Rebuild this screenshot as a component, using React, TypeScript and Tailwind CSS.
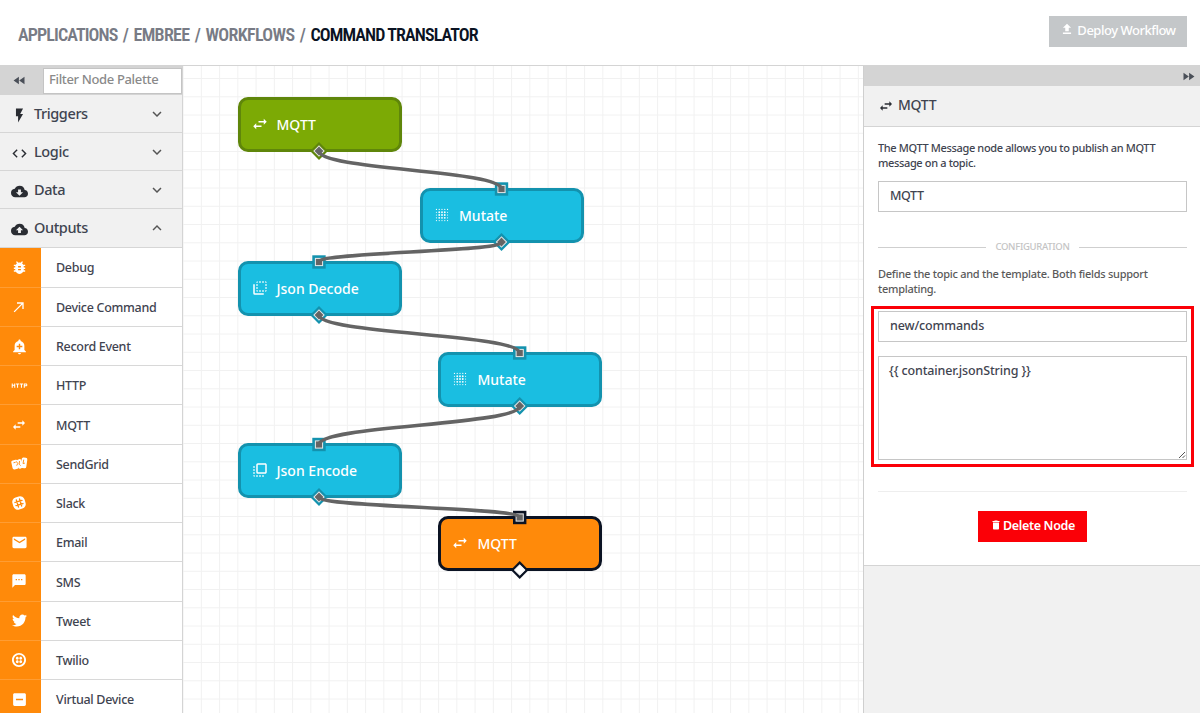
import type { ReactNode } from "react";
import type { IconType } from "react-icons";
import {
  MdAddAlert, MdBugReport, MdCallMade, MdCloudDownload, MdCloudUpload, MdCode, MdDelete,
  MdEmail, MdFastForward, MdFastRewind, MdFlashOn, MdFlipToBack, MdFlipToFront, MdHttp,
  MdIndeterminateCheckBox, MdKeyboardArrowDown, MdKeyboardArrowUp, MdSms, MdSwapHoriz,
} from "react-icons/md";
import { FaTwitter } from "react-icons/fa";
import { SiTwilio } from "react-icons/si";

function SlackIcon() {
  return (
    <svg viewBox="0 0 24 24" className="size-4" fill="none">
      <rect x="2.5" y="2.5" width="19" height="19" rx="7" fill="#fff" transform="rotate(-17 12 12)" />
      <g stroke="#ff8a0a" strokeWidth="2" strokeLinecap="round" transform="rotate(-17 12 12)">
        <path d="M9.5 6.5v11M14.5 6.5v11M6.5 9.5h11M6.5 14.5h11" />
      </g>
    </svg>
  );
}

function SendGridIcon() {
  return (
    <svg viewBox="0 0 24 24" className="size-[17px]">
      <g fill="#fff">
        <rect x="1" y="7" width="9" height="13" rx="2.500" transform="rotate(-12 6 12.500)" />
        <rect x="8.500" y="6" width="7.500" height="13" rx="2.500" transform="rotate(-22 12.500 12)" />
        <rect x="14.500" y="3.500" width="8" height="15" rx="2.500" transform="rotate(8 18 10)" />
      </g>
      <path d="M3.500 11l3-.7M7.500 9l2 3-1.500 3M12 8.500l-.5 4.500 2 2M18 6.500l-1 5.500 2.500-.5" stroke="#ff8a0a" strokeWidth="1.300" fill="none" />
    </svg>
  );
}

function UploadIcon() {
  return (
    <svg viewBox="0 0 24 24" className="mb-[3px] size-[14px]" fill="currentColor">
      <path d="M9 16h6v-6h4l-7-7-7 7h4zm-4 2h14v2.500H5z" />
    </svg>
  );
}

const steps = [-2, -1, 0, 1, 2];

function MutateIcon({ className }: { className?: string }) {
  return (
    <svg viewBox="0 0 24 24" className={className} fill="currentColor">
      {steps.map((row) =>
        steps.map((col) => (
          <circle key={`${row},${col}`} cx={12 + col * 3.7} cy={12 + row * 3.7} r={Math.abs(row) === 2 || Math.abs(col) === 2 ? 0.8 : 1.2} />
        )),
      )}
    </svg>
  );
}

const sections: { label: string; Icon: IconType; open?: boolean }[] = [
  { label: "Triggers", Icon: MdFlashOn },
  { label: "Logic", Icon: MdCode },
  { label: "Data", Icon: MdCloudDownload },
  { label: "Outputs", Icon: MdCloudUpload, open: true },
];

const outputs: { label: string; icon: ReactNode }[] = [
  { label: "Debug", icon: <MdBugReport className="size-[17px]" /> },
  { label: "Device Command", icon: <MdCallMade className="size-4" /> },
  { label: "Record Event", icon: <MdAddAlert className="size-[17px]" /> },
  { label: "HTTP", icon: <MdHttp className="size-[17px]" /> },
  { label: "MQTT", icon: <MdSwapHoriz className="size-4" /> },
  { label: "SendGrid", icon: <SendGridIcon /> },
  { label: "Slack", icon: <SlackIcon /> },
  { label: "Email", icon: <MdEmail className="size-[17px]" /> },
  { label: "SMS", icon: <MdSms className="size-4" /> },
  { label: "Tweet", icon: <FaTwitter className="size-[15px]" /> },
  { label: "Twilio", icon: <SiTwilio className="size-[14px]" /> },
  { label: "Virtual Device", icon: <MdIndeterminateCheckBox className="size-[17px]" /> },
];

const nodes: { label: string; Icon: IconType | typeof MutateIcon; place: string; tone: string }[] = [
  { label: "MQTT", Icon: MdSwapHoriz, place: "left-[54.500px] top-[31px]", tone: "bg-[#7caa05] border-[#5f860a]" },
  { label: "Mutate", Icon: MutateIcon, place: "left-[237px] top-[122px]", tone: "bg-[#1abee1] border-[#1392ae]" },
  { label: "Json Decode", Icon: MdFlipToBack, place: "left-[54.500px] top-[195px]", tone: "bg-[#1abee1] border-[#1392ae]" },
  { label: "Mutate", Icon: MutateIcon, place: "left-[255.400px] top-[286px]", tone: "bg-[#1abee1] border-[#1392ae]" },
  { label: "Json Encode", Icon: MdFlipToFront, place: "left-[54.500px] top-[377px]", tone: "bg-[#1abee1] border-[#1392ae]" },
  { label: "MQTT", Icon: MdSwapHoriz, place: "left-[255.400px] top-[450.400px]", tone: "bg-[#ff8a0a] border-[#0b1323]" },
];

const ports = [
  { x: 136, y: 85, color: "#5f860a", kind: "out" },
  { x: 318.5, y: 123, color: "#1392ae", kind: "in" },
  { x: 318.5, y: 176, color: "#1392ae", kind: "out" },
  { x: 136, y: 196, color: "#1392ae", kind: "in" },
  { x: 136, y: 249, color: "#1392ae", kind: "out" },
  { x: 336.7, y: 287, color: "#1392ae", kind: "in" },
  { x: 336.7, y: 340, color: "#1392ae", kind: "out" },
  { x: 136, y: 378.5, color: "#1392ae", kind: "in" },
  { x: 136, y: 431, color: "#1392ae", kind: "out" },
  { x: 336.7, y: 451.5, color: "#0b1323", kind: "in" },
  { x: 336.7, y: 504, color: "#0b1323", kind: "open" },
];

const wires = [
  [136, 85, 318.5, 123],
  [318.5, 176, 136, 196],
  [136, 249, 336.7, 287],
  [336.7, 340, 136, 378.5],
  [136, 431, 336.7, 451.5],
];

function Wiring() {
  return (
    <svg className="pointer-events-none absolute inset-0" width="680" height="647">
      {ports.map((p, i) =>
        p.kind === "in" ? (
          <g key={i}>
            <rect x={p.x - 6.7} y={p.y - 6.7} width="13.4" height="13.4" fill={p.color} />
            <rect x={p.x - 3.6} y={p.y - 3.6} width="7.2" height="7.2" fill="#666" stroke="#e8e8e8" strokeWidth="1" />
          </g>
        ) : (
          <g key={i} transform={`rotate(45 ${p.x} ${p.y})`}>
            <rect x={p.x - 6.3} y={p.y - 6.3} width="12.6" height="12.6" fill={p.color} />
            <rect
              x={p.x - 3.6} y={p.y - 3.6} width="7.2" height="7.2"
              fill={p.kind === "open" ? "#fff" : "#666"} stroke={p.kind === "open" ? "#fff" : "#e8e8e8"} strokeWidth="1"
            />
          </g>
        ),
      )}
      {wires.map(([x1, y1, x2, y2], i) => {
        const mid = (y1 + y2) / 2;
        return (
          <path key={i} d={`M${x1} ${y1}C${x1} ${mid} ${x2} ${mid} ${x2} ${y2}`} fill="none" stroke="#646464" strokeWidth="3.700" strokeLinecap="round" />
        );
      })}
    </svg>
  );
}

function Palette() {
  return (
    <aside className="flex w-[183px] shrink-0 flex-col overflow-hidden border-r border-[#d4d4d4] bg-[#f1f1f1]">
      <div className="flex h-[29px] shrink-0 items-center bg-[#d4d4d4]">
        <div className="flex w-[43px] justify-center pr-1 text-[#4a4f58]">
          <MdFastRewind className="size-[15px]" />
        </div>
        <input
          placeholder="Filter Node Palette"
          className="h-[26px] w-[139px] border border-[#c4c4c4] bg-white pb-[3px] pl-[5px] text-[13px] tracking-[-0.350px] outline-none placeholder:text-[#8a8a8a]"
        />
      </div>
      {sections.map(({ label, Icon, open }) => (
        <div key={label} className="flex h-[38.150px] shrink-0 items-center border-b-[1.500px] border-[#d6d6d6] text-[#2a2d33]">
          <div className="flex w-[34px] justify-center pt-1 pl-1">
            <Icon className="size-[17px]" />
          </div>
          <span className="flex-1 pt-[0.500px] text-[14.500px] tracking-[-0.400px] text-[#3f4450]">{label}</span>
          {open ? (
            <MdKeyboardArrowUp className="mt-px mr-[16px] size-[18px] text-[#555]" />
          ) : (
            <MdKeyboardArrowDown className="mt-px mr-[16px] size-[18px] text-[#555]" />
          )}
        </div>
      ))}
      <div className="flex flex-col bg-white">
        {outputs.map(({ label, icon }) => (
          <div key={label} className="flex h-[39.230px] shrink-0 items-stretch first:h-[40.200px]">
            <div className="flex w-[41px] items-center justify-center border-b border-[#ff9d33] bg-[#ff8a0a] pr-[3px] text-white">{icon}</div>
            <div className="flex flex-1 items-center border-b border-[#d8d8d8] pt-[3px] pl-[15px] text-[12.500px] tracking-[-0.300px] text-[#3f4450]">{label}</div>
          </div>
        ))}
      </div>
    </aside>
  );
}

function Canvas() {
  return (
    <main className="relative flex-1 overflow-hidden bg-white">
      <svg className="absolute inset-0" width="100%" height="100%">
        <defs>
          <pattern id="grid" width="18.250" height="18.250" patternUnits="userSpaceOnUse" x="-.4" y="-6.200">
            <path d="M18.250 .5H.5V18.250" fill="none" stroke="#f1f1f1" strokeWidth="1" />
          </pattern>
        </defs>
        <rect width="100%" height="100%" fill="url(#grid)" />
      </svg>
      {nodes.map(({ label, Icon, place, tone }, i) => (
        <div key={i} className={`absolute flex h-[55px] w-[164px] items-center rounded-[10px] border-3 pl-[10px] text-white ${place} ${tone}`}>
          <Icon className="mr-[8px] mb-px size-[18px]" />
          <span className="pb-px text-[14px]">{label}</span>
        </div>
      ))}
      <Wiring />
    </main>
  );
}

function Inspector() {
  return (
    <aside className="flex w-[337px] shrink-0 flex-col border-l border-[#cfcfcf] bg-[#f1f1f1] text-[#3f4450]">
      <div className="flex h-5 shrink-0 items-center justify-end bg-[#d4d4d4] pr-1">
        <MdFastForward className="size-[15px] text-[#4a4f58]" />
      </div>
      <div className="flex h-[41px] shrink-0 items-center border-b border-[#d4d4d4] pb-[3px] pl-[14px]">
        <MdSwapHoriz className="mt-[3px] mr-[4px] size-4 text-[#2a2d33]" />
        <span className="text-[14px] tracking-[-0.300px]">MQTT</span>
      </div>
      <div className="flex h-[438.500px] shrink-0 flex-col border-b-[1.500px] border-[#d4d4d4] bg-white pr-[13px] pl-[14px]">
        <p className="mt-[12.500px] text-[11px] leading-[15.500px] tracking-[-0.360px]">
          The MQTT Message node allows you to publish an MQTT
          <br />
          message on a topic.
        </p>
        <div className="mt-[10.500px] flex h-[31px] items-center border border-[#c6c6c6] pb-px pl-[11px] text-[12.500px] tracking-[-0.400px]">MQTT</div>
        <div className="mt-[27px] flex items-center gap-[9px] text-[9.500px] leading-[16px] tracking-[-0.300px] text-[#c4c4c4]">
          <span className="h-px flex-1 bg-[#cfcfcf]" />
          CONFIGURATION
          <span className="h-px flex-1 bg-[#cfcfcf]" />
        </div>
        <p className="mt-[10.500px] text-[11px] leading-[15.500px] tracking-[-0.260px] text-[#5a5a5a]">
          Define the topic and the template. Both fields support
          <br />
          templating.
        </p>
        <div className="-mx-[7px] mt-[9px] flex h-[161px] flex-col border-3 border-[#fb0007] px-[4px] pt-[2px]">
          <div className="flex h-[31px] shrink-0 items-center border border-[#c6c6c6] pl-[11px] text-[12.500px] tracking-[-0.150px]">new/commands</div>
          <div className="relative mt-[14px] h-[104px] border border-[#c6c6c6] pt-[5.500px] pl-[10px] text-[12.500px] leading-[18px] tracking-[-0.130px]">
            {"{{ container.jsonString }}"}
            <svg className="absolute right-0 bottom-0 size-2" viewBox="0 0 8 8" stroke="#555" fill="none">
              <path d="M1 7L7 1M4.500 7L7 4.500" />
            </svg>
          </div>
        </div>
        <div className="mt-[24px] h-px bg-[#eeeeee]" />
        <button className="mt-[19px] flex h-[31px] w-[109px] items-center justify-center gap-px self-center bg-[#fb0007] text-[12.500px] font-semibold tracking-[-0.330px] text-white">
          <MdDelete className="mb-[3px] size-[12px]" />
          Delete Node
        </button>
      </div>
    </aside>
  );
}

export default function App() {
  return (
    <div className="flex h-[713px] w-[1200px] flex-col overflow-hidden bg-white font-['Noto_Sans',sans-serif] font-medium">
      <header className="flex h-[66px] shrink-0 items-center justify-between border-b border-[#d4d4d4] pr-[13px] pl-[18px]">
        <h1 className="flex gap-[5.400px] pt-[3px] font-['Roboto',sans-serif] text-[18px] font-semibold tracking-[-0.900px] whitespace-nowrap text-[#787b85] [font-stretch:75%]">
          <span>APPLICATIONS</span>
          <span>/</span>
          <span className="tracking-[-0.700px]">EMBREE</span>
          <span>/</span>
          <span className="tracking-[-0.650px]">WORKFLOWS</span>
          <span>/</span>
          <span className="text-[#0b1323]">COMMAND TRANSLATOR</span>
        </h1>
        <button className="mb-[3px] flex h-[31px] w-[138px] items-center justify-center gap-[3px] bg-[#c4c7c9] pb-px text-[13px] tracking-[-0.480px] whitespace-nowrap text-white">
          <UploadIcon />
          Deploy Workflow
        </button>
      </header>
      <div className="flex min-h-0 flex-1">
        <Palette />
        <Canvas />
        <Inspector />
      </div>
    </div>
  );
}
